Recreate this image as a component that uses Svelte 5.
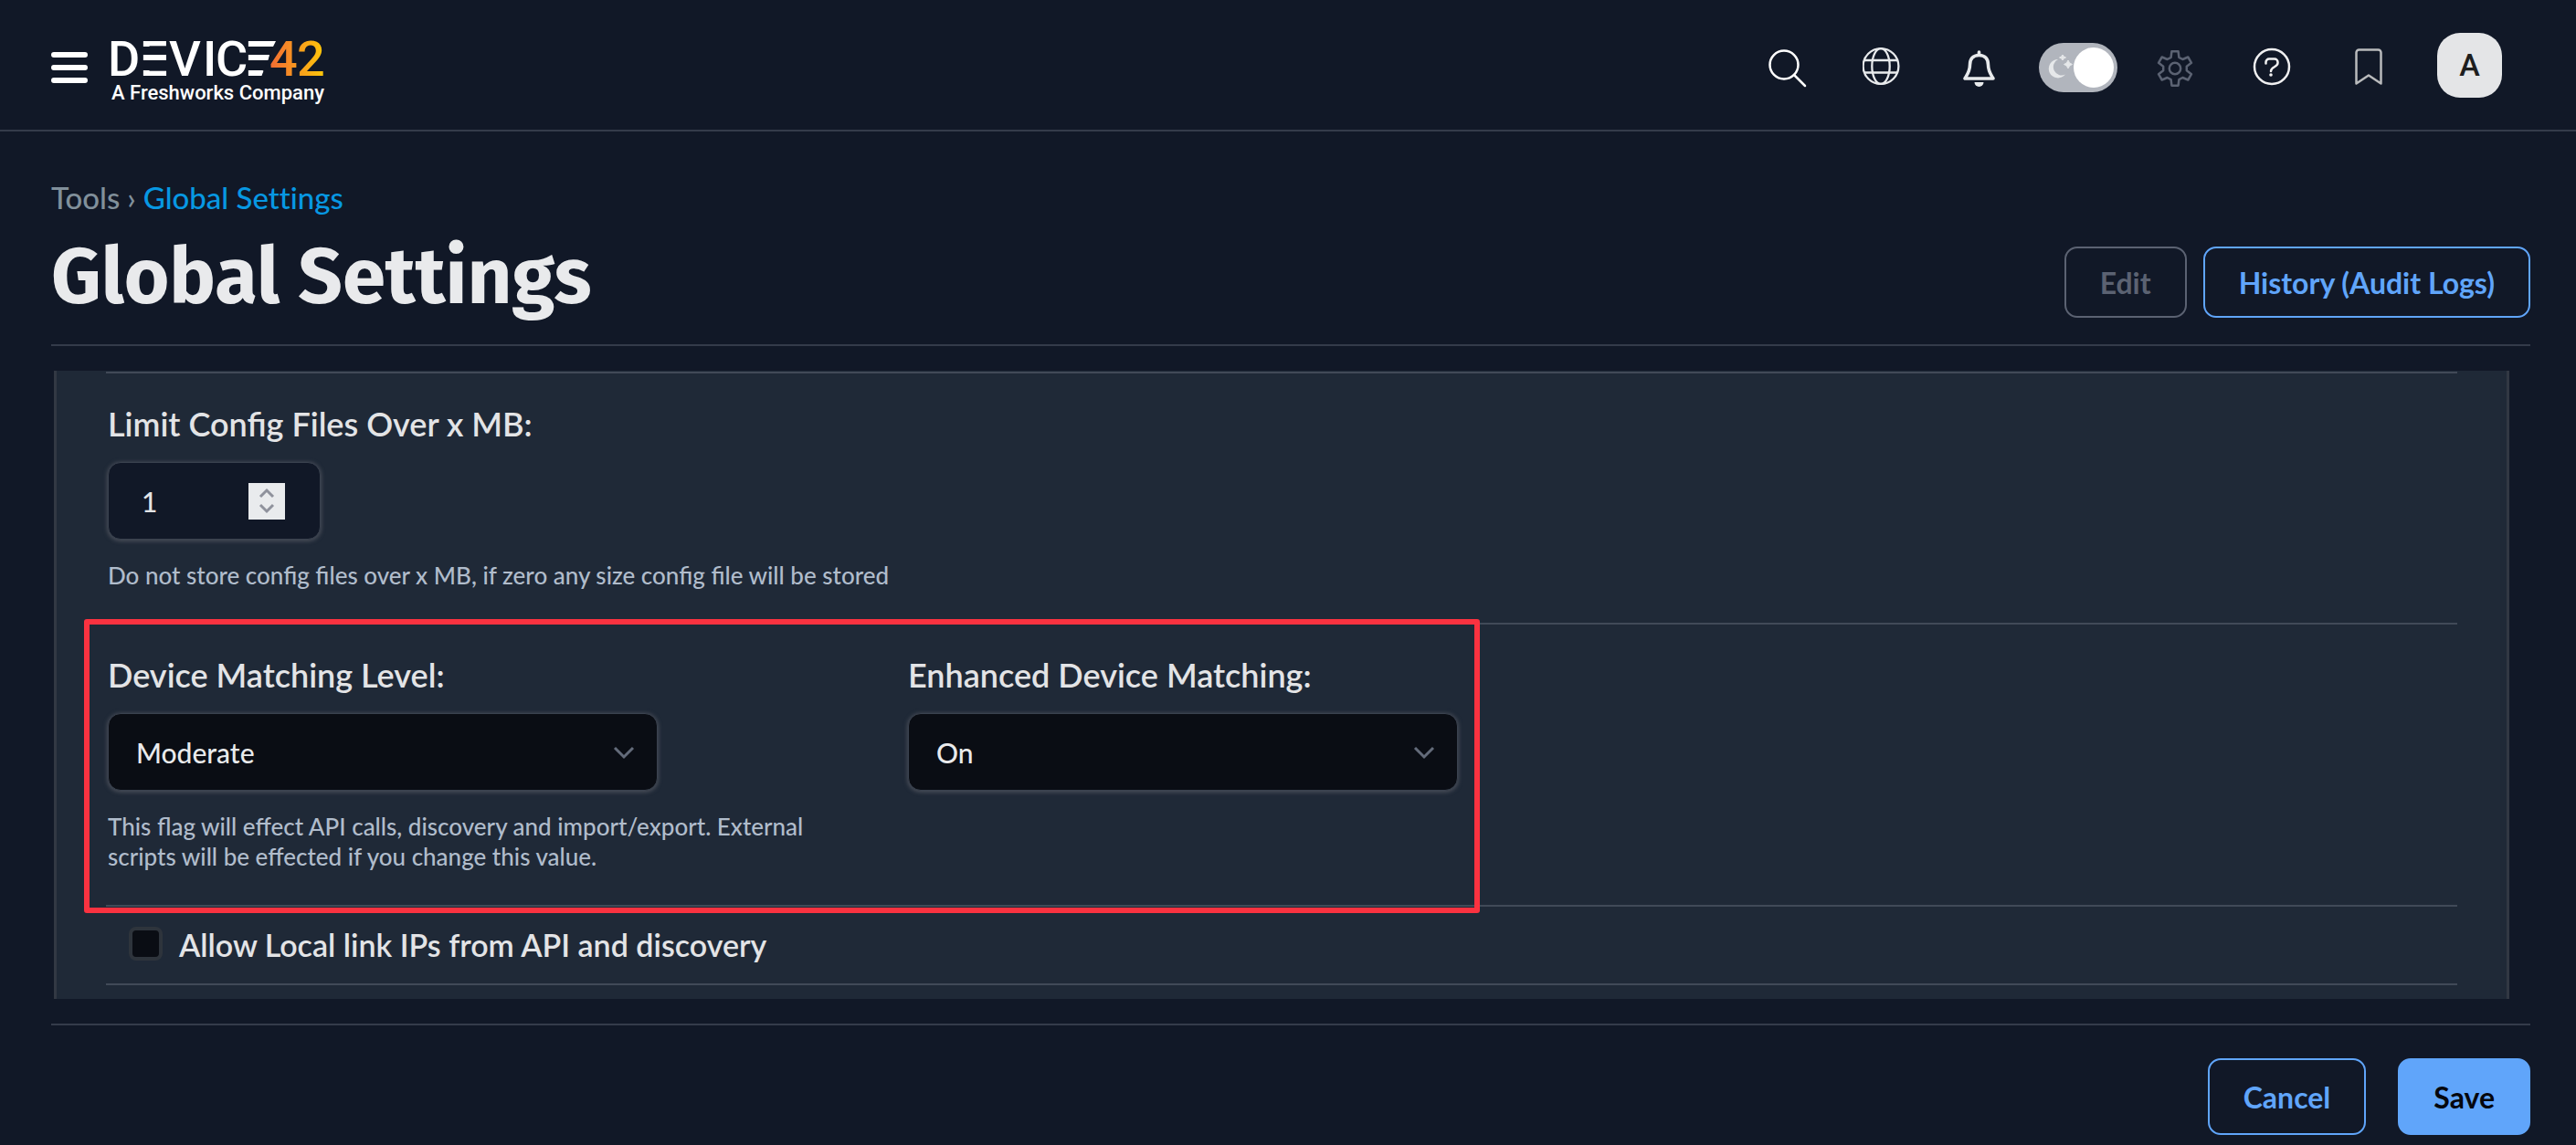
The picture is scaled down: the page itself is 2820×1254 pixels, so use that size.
<script>
  let limit = $state(1);
  let level = $state('Moderate');
  let enhanced = $state('On');
  let allowLocal = $state(false);
  let dark = $state(true);

  // Outline of a six-tooth cog centred on (24, 25)
  const polar = (r, deg) => {
    const a = (deg * Math.PI) / 180;
    return `${(24 + r * Math.sin(a)).toFixed(1)} ${(25 - r * Math.cos(a)).toFixed(1)}`;
  };
  const cog =
    'M' +
    [0, 60, 120, 180, 240, 300]
      .flatMap((d) => [polar(13, d - 20), polar(19, d - 11), polar(19, d + 11), polar(13, d + 20)])
      .join('L') +
    'Z';
</script>

<div class="page">
  <header>
    <button class="plain menu" aria-label="Menu">
      <svg width="40" height="36" viewBox="0 0 40 36"><path d="M3 4H37M3 18H37M3 32H37" stroke="#fff" stroke-width="6" stroke-linecap="round" /></svg>
    </button>
    <a class="logo" href="/" aria-label="Device42">
      <svg width="244" height="58" viewBox="-6 -12 244 58">
        <defs>
          <linearGradient id="sun" gradientUnits="userSpaceOnUse" x1="176" y1="0" x2="232" y2="0">
            <stop offset="0" stop-color="#f26f32" />
            <stop offset="1" stop-color="#ffc60a" />
          </linearGradient>
        </defs>
        <text class="word" y="43" x="-4 31 63 100 114 146">DEVICE</text>
        <g fill="#111827">
          <rect x="34" y="11" width="8" height="9" />
          <rect x="34" y="26" width="8" height="11" />
          <rect x="149" y="11" width="9" height="9" />
          <rect x="149" y="26" width="9" height="11" />
          <path d="M180 4L164 44H182V4Z" />
        </g>
        <path d="M150 5H180L177 11H150ZM150 20H173L171 26H150ZM150 37H166L164 43H150ZM35 20H60V26H35Z" fill="#fff" />
        <text class="word digits" y="43" x="173 203">42</text>
      </svg>
      <span class="tagline">A Freshworks Company</span>
    </a>

    <nav class="tools" aria-label="Toolbar">
      <button class="plain" aria-label="Search">
        <svg class="icon" viewBox="0 0 48 48" stroke="#fff" stroke-width="2.5"><circle cx="20" cy="21" r="15.5" /><path d="M31 32L43 44" stroke-linecap="round" /></svg>
      </button>
      <button class="plain" aria-label="Language">
        <svg class="icon" viewBox="0 0 48 48" stroke="#e8eaec" stroke-width="2.3"><circle cx="20" cy="22.5" r="19.4" /><ellipse cx="20" cy="22.5" rx="9.7" ry="19.4" /><path d="M2 16H38M2 29.5H38" /></svg>
      </button>
      <button class="plain" aria-label="Notifications">
        <svg class="icon" viewBox="0 0 48 48" stroke="#e8eaec" stroke-width="3.6" stroke-linejoin="round">
          <path d="M21.500 10.500C14.500 10.500 11.500 15 11.500 21C11.500 28 9 31 6 36H37C34 31 31.500 28 31.500 21C31.500 15 28.500 10.500 21.500 10.500Z" />
          <path d="M21.500 7V10" stroke-linecap="round" />
          <path d="M16.500 40H26.500A5 5 0 0 1 16.500 40Z" fill="#e8eaec" stroke="none" />
        </svg>
      </button>
      <label class="toggle">
        <input type="checkbox" role="switch" aria-label="Dark mode" bind:checked={dark} />
        <svg width="30" height="28" viewBox="1 2 30 28" fill="#e6e8ea">
          <path d="M12 7A10.200 10.200 0 1 0 20 23.500A9 9 0 0 1 12 7Z" />
          <path d="M17 2Q17.600 4.400 20.500 5Q17.600 5.600 17 8Q16.400 5.600 13.500 5Q16.400 4.400 17 2Z" stroke="#e6e8ea" />
          <path d="M23 8Q24 11.500 27.500 12.500Q24 13.500 23 17Q22 13.500 18.500 12.500Q22 11.500 23 8Z" stroke="#e6e8ea" />
        </svg>
        <span class="knob"></span>
      </label>
      <button class="plain" aria-label="Settings">
        <svg class="icon" viewBox="0 0 48 48" stroke="#5b6272" stroke-width="2.5" stroke-linejoin="round"><path d={cog} /><circle cx="24" cy="25" r="6.2" /></svg>
      </button>
      <button class="plain" aria-label="Help">
        <svg class="icon" viewBox="0 0 48 48" stroke="#f0f0f1" stroke-width="2.5" stroke-linecap="round">
          <circle cx="24" cy="23" r="19" />
          <path d="M17.500 19.500V18A3.500 3.500 0 0 1 21 14.500H27A3.500 3.500 0 0 1 30.500 18V19C30.500 23.500 23 23 23 28" />
          <circle cx="23" cy="32" r="1.800" fill="#f0f0f1" stroke="none" />
        </svg>
      </button>
      <button class="plain" aria-label="Bookmarks">
        <svg class="icon" viewBox="0 0 48 48" stroke="#b9babc" stroke-width="2.500" stroke-linejoin="round"><path d="M10.500 41.500V7.500A3 3 0 0 1 13.500 4.500H34.500A3 3 0 0 1 37.500 7.500V41.500L24 32.500Z" /></svg>
      </button>
    </nav>
    <button class="plain avatar" aria-label="Account">A</button>
  </header>

  <main>
    <nav class="crumbs" aria-label="Breadcrumb">
      <a href="/tools">Tools</a><span>›</span><a class="current" href="/settings">Global Settings</a>
    </nav>
    <div class="heading">
      <h1>Global Settings</h1>
      <div class="actions">
        <button class="btn" disabled>Edit</button>
        <button class="btn">History (Audit Logs)</button>
      </div>
    </div>

    <form class="panel">
      <section class="row">
        <div class="field">
          <label for="limit">Limit Config Files Over x MB:</label>
          <div class="number">
            <input id="limit" type="number" min="0" bind:value={limit} />
            <div class="spin">
              <button type="button" class="plain" aria-label="Increase" onclick={() => (limit += 1)}>
                <svg width="18" height="12" viewBox="0 0 18 12"><path d="M2 10L9 3L16 10" /></svg>
              </button>
              <button type="button" class="plain" aria-label="Decrease" onclick={() => (limit = Math.max(0, limit - 1))}>
                <svg width="18" height="12" viewBox="0 0 18 12"><path d="M2 2L9 9L16 2" /></svg>
              </button>
            </div>
          </div>
          <p>Do not store config files over x MB, if zero any size config file will be stored</p>
        </div>
      </section>

      <section class="row">
        <div class="matching">
          <div class="field wide">
            <label for="level">Device Matching Level:</label>
            <div class="select">
              <select id="level" bind:value={level}>
                <option>Moderate</option>
              </select>
              <svg width="24" height="16" viewBox="0 0 24 16"><path d="M2 2L12 12L22 2" /></svg>
            </div>
            <p>This flag will effect API calls, discovery and import/export. External scripts will be effected if you change this value.</p>
          </div>
          <div class="field">
            <label for="enhanced">Enhanced Device Matching:</label>
            <div class="select">
              <select id="enhanced" bind:value={enhanced}>
                <option>On</option>
              </select>
              <svg width="24" height="16" viewBox="0 0 24 16"><path d="M2 2L12 12L22 2" /></svg>
            </div>
          </div>
          <div class="highlight"></div>
        </div>
      </section>

      <section class="row check">
        <input id="local" type="checkbox" bind:checked={allowLocal} />
        <label for="local">Allow Local link IPs from API and discovery</label>
      </section>
    </form>

    <footer>
      <button class="btn tall">Cancel</button>
      <button class="btn tall primary">Save</button>
    </footer>
  </main>
</div>

<style>
  :global(body) { background: #111827; }
  .page {
    min-height: 100vh;
    box-sizing: border-box;
    background: #111827;
    color: #e3e4e6;
    font-family: Lato, "Open Sans", sans-serif;
  }
  .page *, .page *::before { box-sizing: border-box; }
  button, input, select { font-family: inherit; margin: 0; }
  svg { display: block; fill: none; }
  .plain { border: 0; padding: 0; background: none; cursor: pointer; }

  header {
    display: flex;
    align-items: center;
    height: 144px;
    padding: 6px 81px 0 56px;
    border-bottom: 2px solid #343b4a;
  }
  .menu { margin-right: 20px; }
  .logo {
    display: flex;
    flex-direction: column;
    gap: 3px;
    margin-bottom: 5px;
    color: #fff;
    text-decoration: none;
    font-family: Roboto, sans-serif;
  }
  .word { font: 500 54px Roboto, sans-serif; fill: #fff; }
  .digits { fill: url(#sun); }
  .tagline { padding-left: 6px; font-size: 22px; line-height: 26px; font-weight: 500; white-space: nowrap; }
  .tools {
    display: grid;
    grid-auto-flow: column;
    grid-auto-columns: 106px;
    place-items: center;
    margin-left: auto;
    margin-right: 22px;
  }
  .icon { width: 48px; height: 48px; }
  .toggle {
    display: flex;
    align-items: center;
    position: relative;
    width: 86px;
    height: 54px;
    padding-left: 10px;
    border-radius: 27px;
    background: #b1b5bd;
  }
  .toggle input {
    position: absolute;
    inset: 0;
    opacity: 0;
    width: 100%;
    height: 100%;
  }
  .toggle svg { fill: #e6e8ea; }
  .knob {
    position: absolute;
    right: 4px;
    top: 5px;
    width: 44px;
    height: 44px;
    border-radius: 50%;
    background: #fff;
  }
  .avatar {
    width: 71px;
    height: 71px;
    margin-bottom: 6px;
    border-radius: 25px;
    background: #e4e5e7;
    color: #1e1e1e;
    font-family: Roboto, sans-serif;
    font-weight: 500;
    font-size: 34px;
  }

  main { padding: 52px 50px 11px 56px; }
  .crumbs {
    display: flex;
    gap: 8px;
    font-size: 33px;
    line-height: 40px;
    font-weight: 500;
    font-variant-ligatures: none;
    color: #81909b;
  }
  .crumbs a { color: inherit; text-decoration: none; }
  .crumbs .current { color: #0798e3; }
  .heading {
    display: flex;
    justify-content: space-between;
    align-items: flex-end;
    margin-top: 18px;
    padding-bottom: 23px;
    border-bottom: 2px solid #343b4a;
  }
  h1 {
    margin: 0;
    font-family: "Fira Sans", Roboto, sans-serif;
    font-size: 85px;
    line-height: 100px;
    font-weight: 700;
    color: #e9eaec;
  }
  .actions { display: flex; gap: 18px; padding-bottom: 6px; }
  .btn {
    height: 78px;
    padding: 0 37px;
    border: 2px solid #60a5fa;
    border-radius: 14px;
    background: transparent;
    color: #60a5fa;
    font-size: 32px;
    font-weight: 700;
    cursor: pointer;
  }
  .btn:disabled { border-color: #5b6272; color: #5b6272; }
  .tall { height: 84px; }
  .primary { background: #60a5fa; color: #05070d; }

  .panel {
    margin: 27px 23px 27px 3px;
    padding: 1px 54px 15px;
    background: #1f2937;
    border: solid #323843;
    border-width: 0 3px;
  }
  .row { padding: 33px 2px 35px; border-top: 2px solid #414a58; }
  .field > label { display: block; font-size: 36px; line-height: 44px; font-weight: 600; }
  .field p { margin: 23px 0 0; font-size: 26px; line-height: 33px; font-weight: 500; color: #b0bccb; }
  .number, .select {
    position: relative;
    margin-top: 20px;
    height: 85px;
    border: 1px solid #3a424f;
    border-radius: 14px;
    box-shadow: 0 1px 4px 1px #474c57;
  }
  .number {
    display: flex;
    align-items: center;
    width: 233px;
    padding: 0 38px 0 36px;
    background: #111827;
  }
  .number input {
    flex: 1;
    min-width: 0;
    padding: 0;
    border: 0;
    background: none;
    color: #e3e4e6;
    font-size: 30px;
    font-weight: 500;
    appearance: textfield;
  }
  .number input::-webkit-inner-spin-button { display: none; }
  .spin {
    display: grid;
    place-content: center;
    gap: 5px;
    width: 40px;
    height: 40px;
    background: #e9ebed;
  }
  .spin path { stroke: #8f929c; stroke-width: 3; }
  .select { width: 602px; background: #0a0d14; }
  .select select {
    width: 100%;
    height: 100%;
    padding: 0 30px;
    border: 0;
    border-radius: 14px;
    background: none;
    appearance: none;
    color: #e9eaec;
    font-size: 30px;
    font-weight: 500;
  }
  .select svg { position: absolute; right: 24px; top: 35px; pointer-events: none; }
  .select path { stroke: #636b7a; stroke-width: 3; }
  .matching {
    position: relative;
    display: flex;
    gap: 96px;
    width: fit-content;
    margin: -33px 0 -35px;
    padding: 33px 0 36px;
  }
  .wide { width: 780px; }
  .highlight {
    position: absolute;
    inset: -6px -24px -9px -26px;
    border: 6px solid #fa3240;
    border-radius: 3px;
    pointer-events: none;
  }
  .check {
    display: flex;
    align-items: flex-start;
    gap: 18px;
    padding: 22px 25px;
    border-bottom: 2px solid #414a58;
  }
  .check input {
    appearance: none;
    width: 37px;
    height: 37px;
    border: 4px solid #2e343c;
    border-radius: 8px;
    background: #0a0d14;
  }
  .check label { font-size: 34px; line-height: 40px; font-weight: 600; }

  footer {
    display: flex;
    justify-content: flex-end;
    gap: 35px;
    padding-top: 36px;
    border-top: 2px solid #343b4a;
  }
</style>
